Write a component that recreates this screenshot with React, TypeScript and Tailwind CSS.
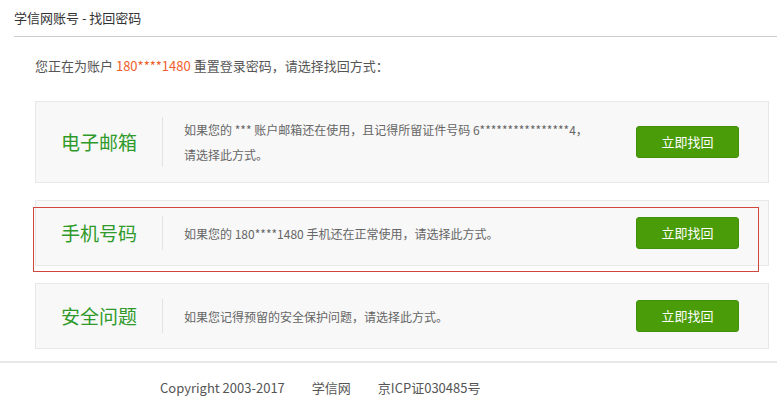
import React from "react";

type Method = {
  title: string;
  desc: React.ReactNode;
  active?: boolean;
};

const methods: Method[] = [
  {
    title: "电子邮箱",
    desc: (
      <>
        如果您的 *** 账户邮箱还在使用，且记得所留证件号码 6****************4，
        <br />
        请选择此方式。
      </>
    ),
  },
  {
    title: "手机号码",
    desc: "如果您的 180****1480 手机还在正常使用，请选择此方式。",
    active: true,
  },
  {
    title: "安全问题",
    desc: "如果您记得预留的安全保护问题，请选择此方式。",
  },
];

const MethodCard = ({ title, desc, active }: Method) => (
  <div className="relative border border-[#e8e8e8] bg-[#f8f8f8] py-[15px] flex items-stretch">
    {/* Highlight box for the selected method */}
    {active && (
      <div className="absolute left-[-3px] top-[6px] w-[726px] h-[65px] border border-[#d0473f] pointer-events-none"></div>
    )}
    <div className="w-[127px] min-h-[34px] border-r border-[#e3e3e3] flex items-center justify-center text-[19px] text-[#2f9a2a]">
      {title}
    </div>
    <div className="flex-1 flex items-center pl-[21px]">
      <p className="w-[440px] text-[12px] leading-[25px] text-[#666]">{desc}</p>
    </div>
    <div className="flex items-center pr-[29px]">
      <button className="w-[103px] h-[32px] rounded-[3px] bg-[#4a9c08] border border-[#42900a] text-white text-[13px]">
        立即找回
      </button>
    </div>
  </div>
);

export default function App() {
  return (
    <div className="w-full bg-white font-['Noto_Sans_CJK_SC',sans-serif]">
      <div className="ml-[14px] h-[37px] border-b border-[#cccccc] text-[13px] leading-[36px] text-[#333]">
        学信网账号 - 找回密码
      </div>

      <div className="ml-[35px] mr-[8px]">
        <p className="pt-[20px] text-[13px] leading-[18px] text-[#555]">
          您正在为账户 <span className="text-[#f0602c]">180****1480</span> 重置登录密码，请选择找回方式：
        </p>

        <div className="mt-[26px] flex flex-col gap-[17px]">
          {methods.map((m) => (
            <MethodCard key={m.title} {...m} />
          ))}
        </div>
      </div>

      <footer className="mt-[12px] border-t-2 border-[#e8e8e8] pt-[15px] pb-[10px]">
        <div className="pl-[160px] flex gap-[27px] text-[13px] leading-[20px] text-[#555]">
          <span>Copyright 2003-2017</span>
          <span>学信网</span>
          <span>京ICP证030485号</span>
        </div>
      </footer>
    </div>
  );
}
